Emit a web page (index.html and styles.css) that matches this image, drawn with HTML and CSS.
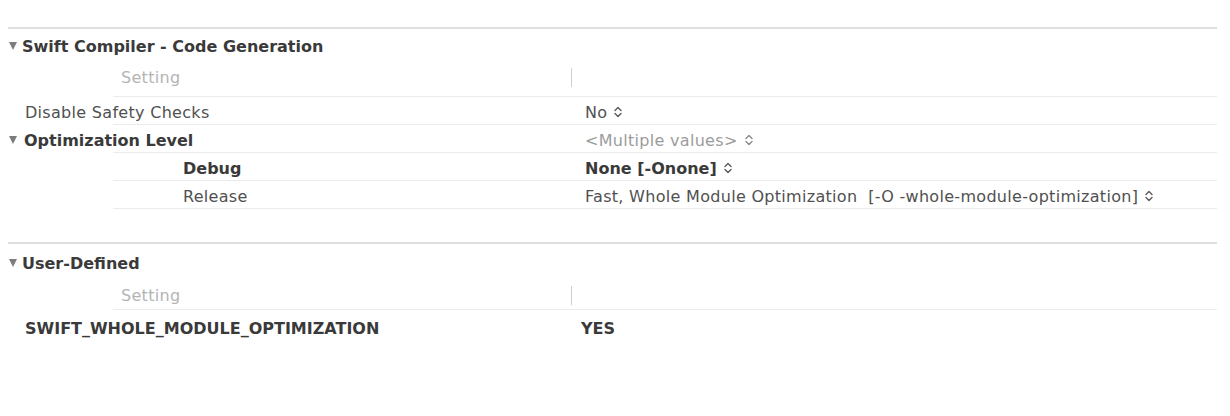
FILE: index.html
```html
<!DOCTYPE html>
<html>
<head>
<meta charset="utf-8">
<link rel="stylesheet" href="styles.css">
</head>
<body>
<div class="pane">
  <section class="group">
    <div class="group-head"><span class="tri"></span>Swift Compiler - Code Generation</div>
    <div class="row colhead">
      <div class="name sub1">Setting<span class="divider"></span></div>
      <div class="val"></div>
    </div>
    <div class="row">
      <div class="name lvl0">Disable Safety Checks</div>
      <div class="val">No<svg class="stepper" viewBox="0 0 8 12" width="8" height="12"><path d="M1 4.6 L4 1.6 L7 4.6 M1 7.4 L4 10.4 L7 7.4"/></svg></div>
    </div>
    <div class="row">
      <div class="name lvl0 bold"><span class="tri inrow"></span>Optimization Level</div>
      <div class="val muted">&lt;Multiple values&gt;<svg class="stepper" viewBox="0 0 8 12" width="8" height="12"><path d="M1 4.6 L4 1.6 L7 4.6 M1 7.4 L4 10.4 L7 7.4"/></svg></div>
    </div>
    <div class="row">
      <div class="name lvl2 bold">Debug</div>
      <div class="val bold">None [-Onone]<svg class="stepper" viewBox="0 0 8 12" width="8" height="12"><path d="M1 4.6 L4 1.6 L7 4.6 M1 7.4 L4 10.4 L7 7.4"/></svg></div>
    </div>
    <div class="row">
      <div class="name lvl2">Release</div>
      <div class="val">Fast, Whole Module Optimization&nbsp; [-O -whole-module-optimization]<svg class="stepper" viewBox="0 0 8 12" width="8" height="12"><path d="M1 4.6 L4 1.6 L7 4.6 M1 7.4 L4 10.4 L7 7.4"/></svg></div>
    </div>
  </section>

  <section class="group second">
    <div class="group-head"><span class="tri"></span>User-Defined</div>
    <div class="row colhead">
      <div class="name sub1">Setting<span class="divider"></span></div>
      <div class="val"></div>
    </div>
    <div class="row plain">
      <div class="name lvl0 bold">SWIFT_WHOLE_MODULE_OPTIMIZATION</div>
      <div class="val bold yes">YES</div>
    </div>
  </section>
</div>
</body>
</html>
```

FILE: styles.css
```css
html, body {
  margin: 0;
  padding: 0;
  background: #ffffff;
}

body {
  font-family: "DejaVu Sans", "Liberation Sans", sans-serif;
  font-size: 16px;
  letter-spacing: 0.3px;
  color: #505050;
}

.pane {
  padding: 27px 13px 0 8px;
}

.group {
  border-top: 2px solid #dedede;
}

.group.second {
  margin-top: 33px;
}

.group-head {
  height: 34px;
  box-sizing: border-box;
  padding-left: 1px;
  display: flex;
  align-items: center;
  font-weight: bold;
  letter-spacing: 0;
  color: #3a3a3a;
}

.second .group-head {
  height: 38px;
}

.tri {
  display: inline-block;
  width: 0;
  height: 0;
  border-left: 4.5px solid transparent;
  border-right: 4.5px solid transparent;
  border-top: 8px solid #7c7c7c;
  margin-right: 5px;
}

.tri.inrow {
  margin-left: -16px;
  margin-right: 7px;
}

.row {
  display: grid;
  grid-template-columns: 577px 1fr;
  height: 28px;
  align-items: center;
  background: linear-gradient(#ebebeb, #ebebeb) no-repeat right bottom;
  background-size: calc(100% - 105px) 1px;
  box-sizing: border-box;
  padding-top: 2px;
}

.row.plain {
  background: none;
  height: 32px;
  padding-top: 4px;
}

.row.colhead {
  height: 34px;
  padding-top: 0;
  padding-bottom: 6px;
}

.second .row.colhead {
  height: 28px;
  padding-bottom: 2px;
}

.name {
  display: flex;
  align-items: center;
  white-space: nowrap;
}

.lvl0 { padding-left: 17px; }
.lvl2 { padding-left: 175px; }
.sub1 { padding-left: 113px; color: #b4b4b4; }

.divider {
  margin-left: auto;
  margin-right: 13px;
  width: 1px;
  height: 19px;
  background: #cfcfcf;
}

.val {
  display: flex;
  align-items: center;
  white-space: nowrap;
}

.val.yes {
  margin-left: -4px;
}

.bold {
  font-weight: bold;
  letter-spacing: 0;
  color: #3a3a3a;
}

.muted {
  color: #9c9c9c;
}

.stepper {
  flex: none;
  margin-left: 7px;
  fill: none;
  stroke: #5a5a5a;
  stroke-width: 1.4;
  stroke-linecap: round;
  stroke-linejoin: round;
}

.muted .stepper {
  stroke: #8a8a8a;
}
```
